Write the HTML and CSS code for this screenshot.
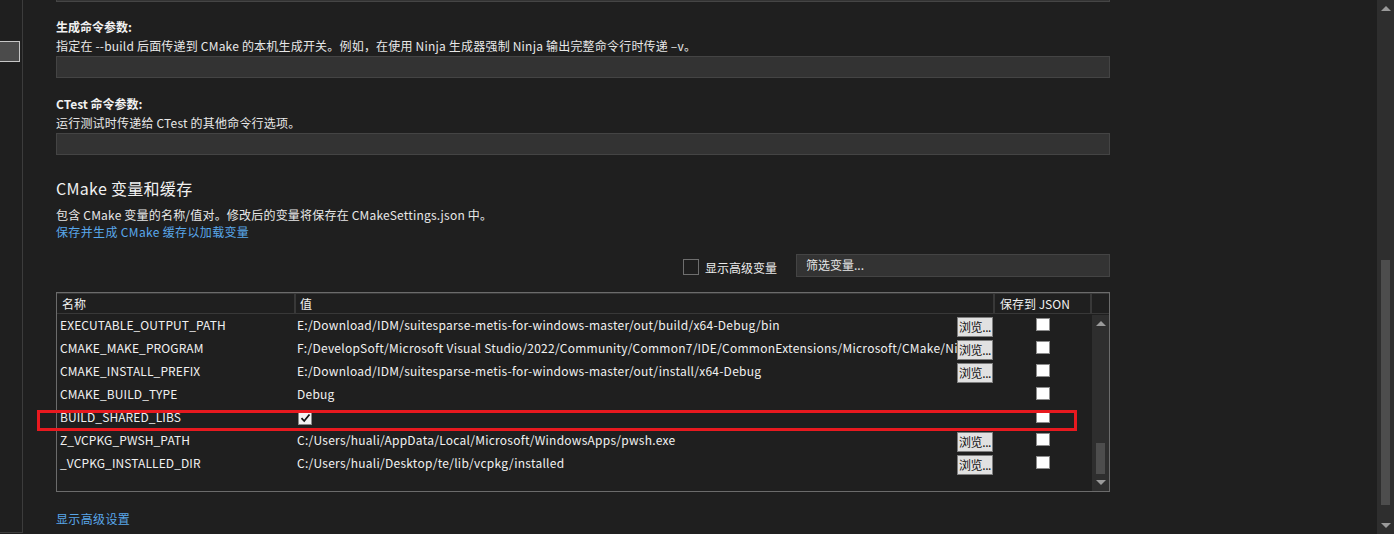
FILE: index.html
```html
<!DOCTYPE html>
<html lang="zh-CN">
<head>
  <meta charset="UTF-8">
  <title>CMake 设置</title>
  <link rel="stylesheet" href="styles.css">
</head>
<body>

<div class="window">
  <aside class="nav">
    <div class="nav-item selected"></div>
  </aside>

  <main class="settings">
    <div class="input-stub"></div>

    <div class="field-label">生成命令参数:</div>
    <div class="field-desc">指定在 --build 后面传递到 CMake 的本机生成开关。例如，在使用 Ninja 生成器强制 Ninja 输出完整命令行时传递 –v。</div>
    <div class="text-input"></div>

    <div class="field-label second">CTest 命令参数:</div>
    <div class="field-desc">运行测试时传递给 CTest 的其他命令行选项。</div>
    <div class="text-input"></div>

    <h3 class="group-title">CMake 变量和缓存</h3>
    <div class="group-desc">包含 CMake 变量的名称/值对。修改后的变量将保存在 CMakeSettings.json 中。</div>
    <a class="link">保存并生成 CMake 缓存以加载变量</a>

    <div class="filter-row">
      <label class="check-label"><span class="checkbox"></span>显示高级变量</label>
      <div class="filter-input">筛选变量...</div>
    </div>

    <div class="cache-table">
      <div class="table-head">
        <div class="th col-name">名称</div>
        <div class="th col-value">值</div>
        <div class="th col-json">保存到 JSON</div>
        <div class="th col-scroll"></div>
      </div>
      <div class="table-body">
        <div class="rows">
          <div class="row">
            <div class="cell col-name">EXECUTABLE_OUTPUT_PATH</div>
            <div class="cell col-value"><span class="value-text">E:/Download/IDM/suitesparse-metis-for-windows-master/out/build/x64-Debug/bin</span><button class="browse">浏览...</button></div>
            <div class="cell col-json"><span class="json-box"></span></div>
          </div>
          <div class="row">
            <div class="cell col-name">CMAKE_MAKE_PROGRAM</div>
            <div class="cell col-value"><span class="value-text">F:/DevelopSoft/Microsoft Visual Studio/2022/Community/Common7/IDE/CommonExtensions/Microsoft/CMake/Ninja/ninja.exe</span><button class="browse">浏览...</button></div>
            <div class="cell col-json"><span class="json-box"></span></div>
          </div>
          <div class="row">
            <div class="cell col-name">CMAKE_INSTALL_PREFIX</div>
            <div class="cell col-value"><span class="value-text">E:/Download/IDM/suitesparse-metis-for-windows-master/out/install/x64-Debug</span><button class="browse">浏览...</button></div>
            <div class="cell col-json"><span class="json-box"></span></div>
          </div>
          <div class="row">
            <div class="cell col-name">CMAKE_BUILD_TYPE</div>
            <div class="cell col-value"><span class="value-text">Debug</span></div>
            <div class="cell col-json"><span class="json-box"></span></div>
          </div>
          <div class="row">
            <div class="cell col-name">BUILD_SHARED_LIBS</div>
            <div class="cell col-value">
              <span class="value-check">
                <svg width="11" height="10" viewBox="0 0 11 10"><path d="M1.5 5.2 L4.2 8 L9.5 1.5" fill="none" stroke="#111" stroke-width="1.8"/></svg>
              </span>
            </div>
            <div class="cell col-json"><span class="json-box"></span></div>
          </div>
          <div class="row">
            <div class="cell col-name">Z_VCPKG_PWSH_PATH</div>
            <div class="cell col-value"><span class="value-text">C:/Users/huali/AppData/Local/Microsoft/WindowsApps/pwsh.exe</span><button class="browse">浏览...</button></div>
            <div class="cell col-json"><span class="json-box"></span></div>
          </div>
          <div class="row">
            <div class="cell col-name">_VCPKG_INSTALLED_DIR</div>
            <div class="cell col-value"><span class="value-text">C:/Users/huali/Desktop/te/lib/vcpkg/installed</span><button class="browse">浏览...</button></div>
            <div class="cell col-json"><span class="json-box"></span></div>
          </div>
        </div>
        <div class="vscroll table-scroll">
          <div class="arrow up"></div>
          <div class="track"><div class="thumb"></div></div>
          <div class="arrow down"></div>
        </div>
      </div>
    </div>

    <a class="link bottom-link">显示高级设置</a>
  </main>

  <div class="vscroll page-scroll">
    <div class="arrow up"></div>
    <div class="track"><div class="thumb"></div></div>
    <div class="arrow down"></div>
  </div>
</div>

<!-- red annotation box drawn over the screenshot -->
<div class="highlight"></div>

</body>
</html>
```

FILE: styles.css
```css
body {
  margin: 0;
  background-color: #1f1f1f;
  color: #f1f1f1;
  font-family: "Noto Sans CJK SC", "Noto Sans", sans-serif;
  font-size: 12px;
  overflow: hidden;
}

.window {
  display: flex;
  height: 534px;
}

/* left nav strip */
.nav {
  width: 22px;
  height: 532px;
  border-right: 1px solid #3c3c3c;
  border-bottom: 1px solid #3c3c3c;
  flex-shrink: 0;
}

.nav-item.selected {
  margin-top: 41px;
  width: 19px;
  height: 19px;
  background-color: #4b4b4b;
  border: 1px solid #c6c6c6;
  border-left: none;
}

.settings {
  width: 1054px;
  padding-left: 33px;
  flex-shrink: 0;
  display: flex;
  flex-direction: column;
  align-items: flex-start;
}

.input-stub {
  width: 1052px;
  height: 1px;
  background-color: #333;
  border: 1px solid #454545;
  border-top: none;
}

.field-label {
  font-weight: bold;
  line-height: 17px;
  margin-top: 16px;
}

.field-label.second {
  margin-top: 17px;
}

.field-desc {
  line-height: 17px;
  margin-top: 2px;
  color: #e8e8e8;
  letter-spacing: 0.2px;
}

.text-input {
  width: 1052px;
  height: 20px;
  margin-top: 2px;
  background-color: #333333;
  border: 1px solid #444444;
}

.group-title {
  font-size: 16px;
  font-weight: normal;
  line-height: 22px;
  margin: 22px 0 0;
  letter-spacing: 0.3px;
}

.group-desc {
  line-height: 17px;
  margin-top: 7px;
  color: #e8e8e8;
  letter-spacing: 0.2px;
}

.link {
  color: #59a7ea;
  line-height: 17px;
  letter-spacing: 0.35px;
  cursor: pointer;
}

.filter-row {
  display: flex;
  align-items: center;
  align-self: stretch;
  justify-content: flex-end;
  margin-top: 14px;
  height: 23px;
}

.check-label {
  display: flex;
  align-items: center;
  margin-top: 3px;
  color: #ececec;
}

.checkbox {
  width: 14px;
  height: 14px;
  border: 1px solid #6e6e6e;
  margin-right: 6px;
}

.filter-input {
  width: 303px;
  height: 21px;
  margin-left: 19px;
  padding-left: 9px;
  line-height: 20px;
  background-color: #333333;
  border: 1px solid #444444;
  color: #e6e6e6;
}

/* cache grid */
.cache-table {
  width: 1052px;
  height: 198px;
  margin-top: 15px;
  border: 1px solid #6b6b6b;
  display: flex;
  flex-direction: column;
}

.table-head {
  display: flex;
  height: 19px;
  border-top: 1px solid #383838;
  border-bottom: 1px solid #383838;
}

.th {
  line-height: 19px;
  padding-left: 5px;
  box-sizing: border-box;
  border-right: 2px solid #383838;
}

.th.col-value {
  padding-left: 4px;
}

.col-name { width: 239px; }
.col-value { width: 699px; }
.col-json { width: 97px; }
.col-scroll { width: 17px; border-right: none; }

.table-body {
  flex: 1;
  display: flex;
}

.rows {
  flex: 1;
}

.row {
  display: flex;
  height: 23px;
}

.cell {
  box-sizing: border-box;
  line-height: 23px;
  white-space: nowrap;
}

.cell.col-name {
  padding-left: 3px;
  margin-top: -1px;
  letter-spacing: 0.1px;
}

.cell.col-value {
  display: flex;
  padding-left: 1px;
  padding-right: 2px;
}

.value-text {
  flex: 1;
  overflow: hidden;
  margin-top: -1px;
  letter-spacing: 0.25px;
}

.browse {
  width: 36px;
  height: 20px;
  margin-top: 3px;
  padding: 0 0 0 1px;
  text-align: left;
  overflow: hidden;
  white-space: nowrap;
  background-color: #e1e1e1;
  border: 1px solid #7e7e7e;
  color: #111;
  font-family: inherit;
  font-size: 12px;
  line-height: 18px;
  letter-spacing: -0.4px;
}

.value-check {
  width: 12px;
  height: 12px;
  margin: 5px 0 0 1px;
  background-color: #f2f2f2;
  border: 1px solid #8a8a8a;
  display: flex;
  align-items: center;
  justify-content: center;
}

.cell.col-json {
  display: flex;
  justify-content: center;
  padding-right: 1px;
}

.json-box {
  width: 12px;
  height: 11px;
  margin-top: 4px;
  background-color: #fff;
  border: 1px solid #8c8c8c;
}

/* scrollbars */
.vscroll {
  background-color: #2e2e2e;
  display: flex;
  flex-direction: column;
  align-items: center;
}

.vscroll .arrow {
  height: 17px;
  display: flex;
  align-items: center;
  justify-content: center;
}

.vscroll .arrow::before {
  content: "";
  border-left: 5px solid transparent;
  border-right: 5px solid transparent;
}

.vscroll .arrow.up::before {
  border-bottom: 5px solid #9a9a9a;
}

.vscroll .arrow.down::before {
  border-top: 5px solid #9a9a9a;
}

.vscroll .track {
  flex: 1;
}

.thumb {
  width: 9px;
  background-color: #4d4d4d;
}

.table-scroll {
  width: 17px;
  margin-top: 1px;
}

.table-scroll .thumb {
  margin-top: 111px;
  height: 31px;
}

.page-scroll {
  width: 17px;
  height: 534px;
  margin-left: auto;
}

.page-scroll .thumb {
  margin-top: 243px;
  height: 245px;
}

.bottom-link {
  margin-top: 18px;
}

.highlight {
  position: absolute;
  left: 37px;
  top: 410px;
  width: 1040px;
  height: 21px;
  box-sizing: border-box;
  border: 3px solid #e8191f;
}
```
